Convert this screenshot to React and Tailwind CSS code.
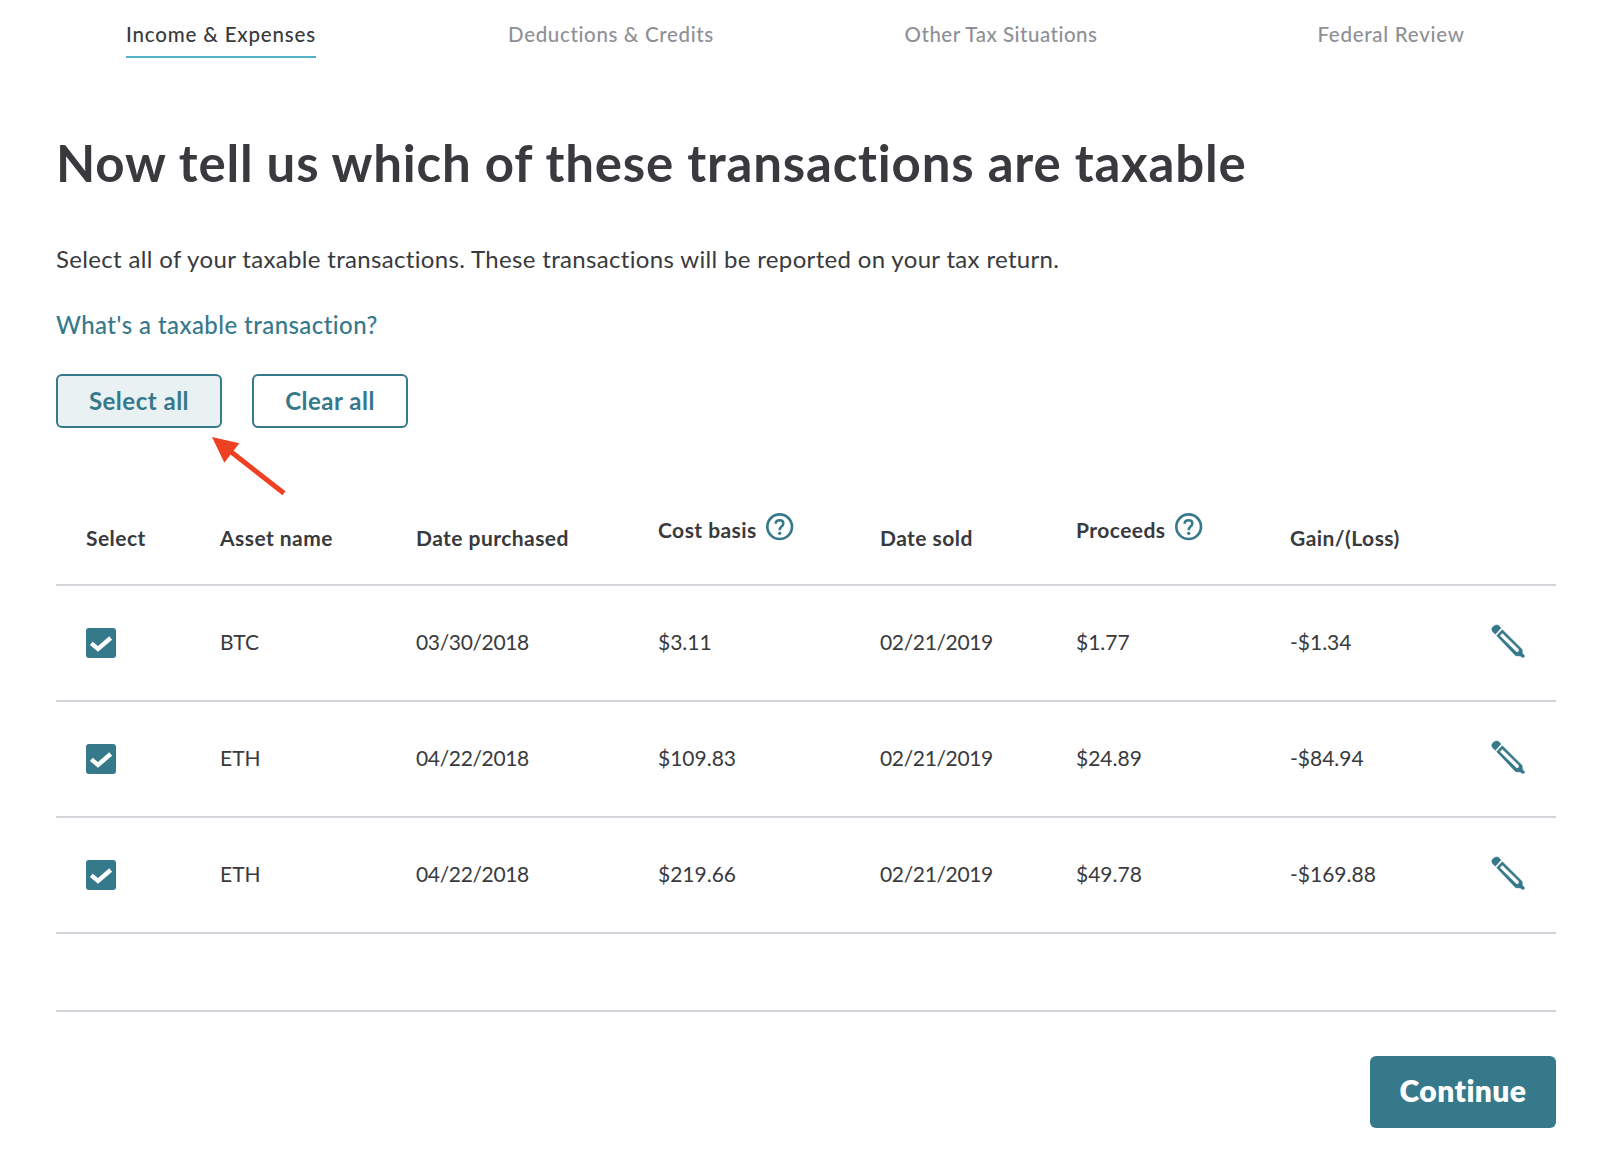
import React, { useState } from 'react';

const tabs = [
  { label: 'Income & Expenses', tracking: 'tracking-[0.82px]' },
  { label: 'Deductions & Credits', tracking: 'tracking-[0.64px]' },
  { label: 'Other Tax Situations', tracking: 'tracking-[0.5px]' },
  { label: 'Federal Review', tracking: 'tracking-[0.73px]' },
];

const transactions = [
  { id: 1, asset: 'BTC', purchased: '03/30/2018', cost: '$3.11', sold: '02/21/2019', proceeds: '$1.77', gain: '-$1.34' },
  { id: 2, asset: 'ETH', purchased: '04/22/2018', cost: '$109.83', sold: '02/21/2019', proceeds: '$24.89', gain: '-$84.94' },
  { id: 3, asset: 'ETH', purchased: '04/22/2018', cost: '$219.66', sold: '02/21/2019', proceeds: '$49.78', gain: '-$169.88' },
];

const rowGrid = 'grid grid-cols-[134px_196px_242px_222px_196px_214px_201px_1fr] pl-[30px] border-b-2 border-[#d4d5da]';

const HelpIcon = () => (
  <svg className="w-7 h-7 shrink-0" viewBox="0 0 84 84" fill="none" stroke="#36798b">
    <circle cx="41" cy="41" r="37" strokeWidth="8" />
    <path d="M29 32 Q29 22 41 22 Q52 22 52 31 Q52 37 46 41 Q41 45 41 52" strokeWidth="7.5" />
    <circle cx="41" cy="61" r="5" fill="#36798b" stroke="none" />
  </svg>
);

const PencilIcon = () => (
  <svg className="w-[34px] h-[34px]" viewBox="33 28 102 102" fill="#36798b" stroke="#36798b" strokeWidth="1.5">
    <path d="M46 59 L38 51 Q32 43 39 36 Q47 28 55 32 L63 40 Z" />
    <path
      fillRule="evenodd"
      d="M50 63 L67 45 L126 104 L128 118 L134 123 L132 128 L126 128 L121 124 L107 123 Z M59 63 L67 55 L117 104 L117 111 L110 113 Z"
    />
  </svg>
);

const Checkbox = ({ checked, onToggle }) => (
  <button
    role="checkbox"
    aria-checked={checked}
    onClick={onToggle}
    className={`w-[30px] h-[30px] rounded-[3px] ${checked ? 'bg-[#36798b]' : 'bg-white border-2 border-[#8d9096]'}`}
  >
    {checked && (
      <svg className="w-[30px] h-[30px]" viewBox="0 0 90 90" fill="none">
        <path d="M16 46 L36 63 L74 30" stroke="white" strokeWidth="13" />
      </svg>
    )}
  </button>
);

const HeaderCell = ({ children }) => <div className="pt-[34px]">{children}</div>;

const HelpHeaderCell = ({ children }) => (
  <div className="flex pt-[23px]">
    <span className="pt-[3px] mr-[9px]">{children}</span>
    <HelpIcon />
  </div>
);

const App = () => {
  const [activeTab, setActiveTab] = useState(0);
  const [selected, setSelected] = useState([1, 2, 3]);

  const toggle = (id) => {
    setSelected(prev => (prev.includes(id) ? prev.filter(s => s !== id) : [...prev, id]));
  };

  return (
    <div className="min-h-screen bg-white font-['Lato',sans-serif] text-[#393a3d] [font-variant-ligatures:none]">
      <nav className="grid grid-cols-4 w-[1560px] ml-[26px] pt-5">
        {tabs.map((tab, index) => (
          <div key={tab.label} className="flex justify-center">
            <button
              onClick={() => setActiveTab(index)}
              className={`pb-2 border-b-2 text-[20.5px] leading-7 font-medium whitespace-nowrap ${tab.tracking} ${
                index === activeTab ? 'border-[#53b3c6]' : 'border-transparent text-[#8f9096]'
              }`}
            >
              {tab.label}
            </button>
          </div>
        ))}
      </nav>

      <main className="flex flex-col w-[1500px] ml-14">
        <h1 className="mt-[75px] text-[51px] leading-[60px] font-bold tracking-[0.8px] whitespace-nowrap">
          Now tell us which of these transactions are taxable
        </h1>
        <p className="mt-[50px] text-[24px] leading-8 tracking-[0.335px]">
          Select all of your taxable transactions. These transactions will be reported on your tax return.
        </p>
        <a href="#" className="mt-[34px] self-start text-[24px] leading-8 font-medium tracking-[0.43px] text-[#36798b]">
          What's a taxable transaction?
        </a>

        <div className="relative flex gap-[30px] mt-[33px] text-[24px] font-bold tracking-[0.5px] text-[#36798b]">
          <button
            onClick={() => setSelected(transactions.map(t => t.id))}
            className="w-[166px] h-[54px] rounded-[6px] border-2 border-[#36798b] bg-[#e9f1f3]"
          >
            Select all
          </button>
          <button
            onClick={() => setSelected([])}
            className="w-[156px] h-[54px] rounded-[6px] border-2 border-[#36798b] bg-white"
          >
            Clear all
          </button>
          <svg className="absolute left-[154px] top-[61px] w-[78px] h-[63px]" viewBox="0 0 234 189">
            <path d="M6 6 L88 25 L43 83 Z" fill="#ee4124" />
            <path d="M60 48 L222 175" stroke="#ee4124" strokeWidth="15" />
          </svg>
        </div>

        <div className="mt-[62px]">
          <div className={`${rowGrid} h-24 text-[21px] leading-7 font-bold tracking-[0.45px] whitespace-nowrap`}>
            <HeaderCell>Select</HeaderCell>
            <HeaderCell>Asset name</HeaderCell>
            <HeaderCell>Date purchased</HeaderCell>
            <HelpHeaderCell>Cost basis</HelpHeaderCell>
            <HeaderCell>Date sold</HeaderCell>
            <HelpHeaderCell>Proceeds</HelpHeaderCell>
            <HeaderCell>Gain/(Loss)</HeaderCell>
          </div>

          {transactions.map(t => (
            <div key={t.id} className={`${rowGrid} h-[116px] items-center text-[21px] leading-[26px]`}>
              <Checkbox checked={selected.includes(t.id)} onToggle={() => toggle(t.id)} />
              <span className="pb-0.5">{t.asset}</span>
              <span className="pb-0.5 tracking-[-0.35px]">{t.purchased}</span>
              <span className="pb-0.5">{t.cost}</span>
              <span className="pb-0.5 tracking-[-0.35px]">{t.sold}</span>
              <span className="pb-0.5">{t.proceeds}</span>
              <span className="pb-0.5">{t.gain}</span>
              <button aria-label="Edit" className="w-[34px] h-[34px] mb-[5px]">
                <PencilIcon />
              </button>
            </div>
          ))}
          <div className="h-[78px] border-b-2 border-[#d4d5da]" />
        </div>

        <button className="self-end mt-11 w-[186px] h-[72px] pb-[3px] rounded-[6px] bg-[#36798b] text-white text-[30px] font-extrabold tracking-[0.4px]">
          Continue
        </button>
      </main>
    </div>
  );
};

export default App;
